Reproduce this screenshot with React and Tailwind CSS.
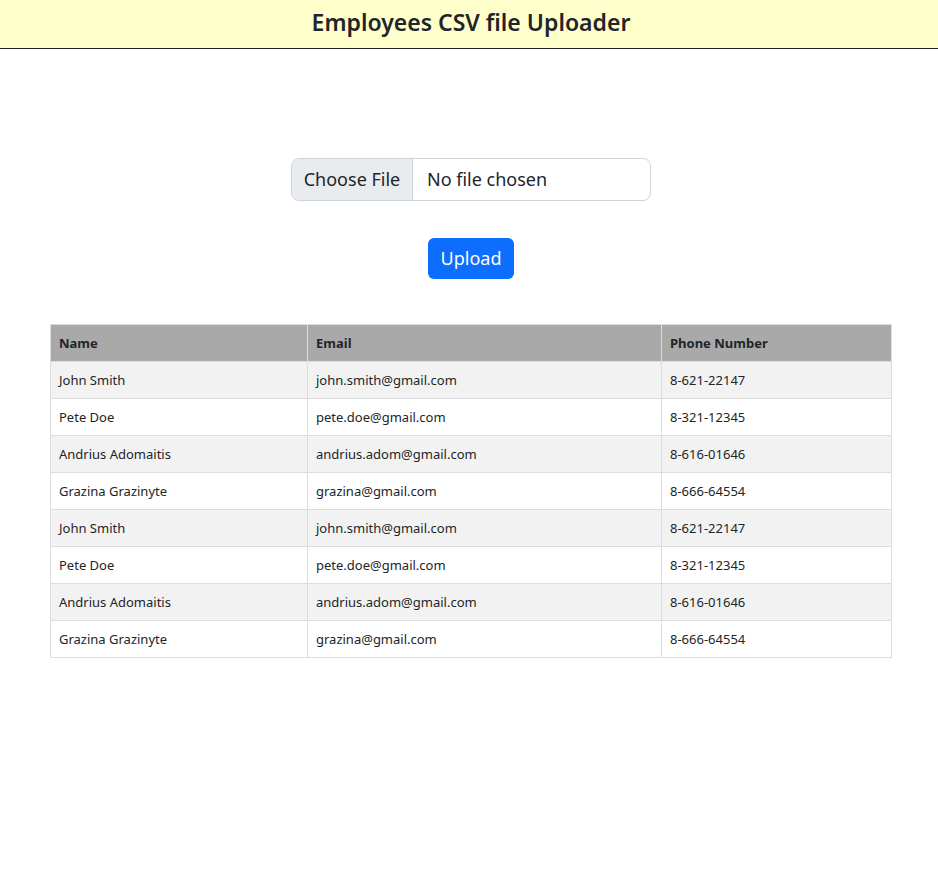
const rows = [
  ["John Smith", "john.smith@gmail.com", "8-621-22147"],
  ["Pete Doe", "pete.doe@gmail.com", "8-321-12345"],
  ["Andrius Adomaitis", "andrius.adom@gmail.com", "8-616-01646"],
  ["Grazina Grazinyte", "grazina@gmail.com", "8-666-64554"],
  ["John Smith", "john.smith@gmail.com", "8-621-22147"],
  ["Pete Doe", "pete.doe@gmail.com", "8-321-12345"],
  ["Andrius Adomaitis", "andrius.adom@gmail.com", "8-616-01646"],
  ["Grazina Grazinyte", "grazina@gmail.com", "8-666-64554"],
];

export default function App() {
  return (
    <div
      className="min-h-[892px] bg-white text-[#212529]"
      style={{ fontFamily: '"Noto Sans", "Open Sans", sans-serif' }}
    >
      {/* Header */}
      <header className="h-[49px] bg-[#ffffcc] border-b border-[#222] flex items-center justify-center pl-[4px]">
        <h1 className="text-[23px] font-semibold leading-none pb-[4px]">Employees CSV file Uploader</h1>
      </header>

      {/* Upload form */}
      <div className="flex flex-col items-center pt-[109px] pl-[4px]">
        <label className="w-[360px] h-[43px] flex rounded-[8px] border border-[#ced4da] overflow-hidden text-[18px] cursor-pointer">
          <span className="w-[121px] bg-[#e9ecef] border-r border-[#ced4da] flex items-center justify-center">
            Choose File
          </span>
          <span className="flex items-center pl-[14px]">No file chosen</span>
          <input type="file" className="hidden" />
        </label>
        <button className="mt-[37px] w-[86px] h-[41px] bg-[#0d6efd] text-white rounded-[6px] text-[18px] flex items-center justify-center">
          Upload
        </button>
      </div>

      {/* Table */}
      <div className="px-[50px] pt-[45px]">
        <table className="w-[842px] border-collapse text-[13px]">
          <thead>
            <tr className="bg-[#a9a9a9] h-[37px]">
              <th className="w-[257px] text-left font-bold px-[8px] pt-[2px] border border-[#ddd]">Name</th>
              <th className="w-[354px] text-left font-bold px-[8px] pt-[2px] border border-[#ddd]">Email</th>
              <th className="text-left font-bold px-[8px] pt-[2px] border border-[#ddd]">Phone Number</th>
            </tr>
          </thead>
          <tbody>
            {rows.map((r, i) => (
              <tr key={i} className={`h-[37px] ${i % 2 === 0 ? "bg-[#f2f2f2]" : "bg-white"}`}>
                {r.map((c, j) => (
                  <td key={j} className="px-[8px] pt-[2px] border border-[#ddd]">
                    {c}
                  </td>
                ))}
              </tr>
            ))}
          </tbody>
        </table>
      </div>
    </div>
  );
}
